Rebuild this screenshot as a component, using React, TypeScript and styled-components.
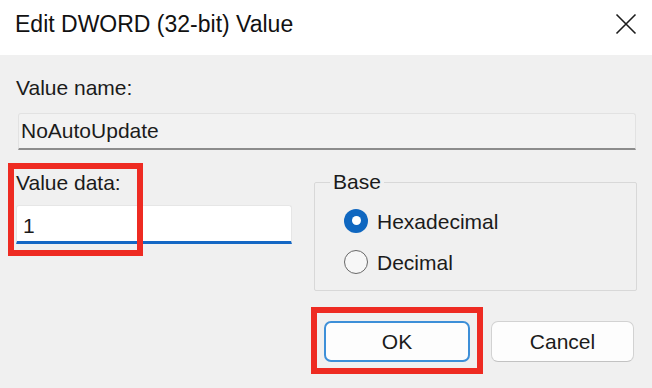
import React, { useState } from 'react';
import styled, { createGlobalStyle } from 'styled-components';

const GlobalStyle = createGlobalStyle`
	html, body {
		margin: 0;
		padding: 0;
		background: #f0f0f0;
	}
	* {
		box-sizing: border-box;
	}
`;

type Base = 'hex' | 'dec';

const App: React.FC = () => {
	const [value, setValue] = useState('1');
	const [base, setBase] = useState<Base>('hex');

	return (
		<Dialog>
			<GlobalStyle />
			<TitleBar>
				<Title>Edit DWORD (32-bit) Value</Title>
				<CloseButton aria-label="Close">
					<svg width="22" height="22" viewBox="0 0 22 22">
						<path d="M1.5 1.5 L20.5 20.5 M20.5 1.5 L1.5 20.5" stroke="#1c1c1c" strokeWidth="1.6" />
					</svg>
				</CloseButton>
			</TitleBar>

			<Body>
				<Label>Value name:</Label>
				<ReadOnlyField>NoAutoUpdate</ReadOnlyField>

				<MiddleRow>
					<DataColumn>
						<Label $offset={1}>Value data:</Label>
						<DataInput value={value} onChange={(e) => setValue(e.target.value)} />
						<Highlight />
					</DataColumn>

					<GroupBox>
						<Legend>Base</Legend>
						<RadioList>
							<RadioRow onClick={() => setBase('hex')}>
								<RadioCircle $checked={base === 'hex'} />
								<span>Hexadecimal</span>
							</RadioRow>
							<RadioRow onClick={() => setBase('dec')}>
								<RadioCircle $checked={base === 'dec'} />
								<span>Decimal</span>
							</RadioRow>
						</RadioList>
					</GroupBox>
				</MiddleRow>

				<ButtonRow>
					<Marked>
						<Button $primary $width={146}>OK</Button>
					</Marked>
					<Button $width={143}>Cancel</Button>
				</ButtonRow>
			</Body>
		</Dialog>
	);
};

const font = `"Liberation Sans", Arial, sans-serif`;
const annotation = '#ee2b22';

const Dialog = styled.div`
	width: 652px;
	height: 388px;
	overflow: hidden;
	display: flex;
	flex-direction: column;
	background: #f0f0f0;
	font-family: ${font};
	color: #1b1b1b;
`;

const TitleBar = styled.div`
	height: 55px;
	flex-shrink: 0;
	background: #ffffff;
	display: flex;
	align-items: flex-start;
	justify-content: space-between;
	padding: 12px 15px 0 15px;
`;

const Title = styled.div`
	font-size: 23px;
	line-height: 24px;
	color: #111;
`;

const CloseButton = styled.div`
	width: 22px;
	height: 22px;
	margin-top: 1px;
	display: flex;

	svg {
		display: block;
	}
`;

const Body = styled.div`
	flex: 1;
	display: flex;
	flex-direction: column;
	padding: 21px 15px 0 16px;
`;

const Label = styled.div<{ $offset?: number }>`
	font-size: 21px;
	line-height: 24px;
	padding-top: ${({ $offset }) => $offset ?? 0}px;
`;

const ReadOnlyField = styled.div`
	height: 37px;
	margin: 13px 1px 0 2px;
	padding: 5px 0 0 2px;
	font-size: 21px;
	line-height: 24px;
	background: #f2f2f2;
	border: 1px solid #e2e2e2;
	border-bottom: 2px solid #8c8c8c;
	border-radius: 3px 3px 0 0;
`;

const MiddleRow = styled.div`
	display: flex;
	align-items: flex-start;
	gap: 22px;
	margin-top: 20px;
`;

const DataColumn = styled.div`
	position: relative;
	width: 276px;
	display: flex;
	flex-direction: column;
`;

const DataInput = styled.input`
	height: 39px;
	margin-top: 10px;
	padding: 5px 0 0 6px;
	font-family: ${font};
	font-size: 21px;
	line-height: 24px;
	color: #1b1b1b;
	background: #ffffff;
	border: 1px solid #e6e6e6;
	border-bottom: 3px solid #1467c4;
	border-radius: 3px 3px 0 0;
	outline: none;
`;

const Highlight = styled.div`
	position: absolute;
	left: -8px;
	top: -7px;
	width: 135px;
	height: 93px;
	border: 6px solid ${annotation};
	pointer-events: none;
`;

const GroupBox = styled.fieldset`
	width: 323px;
	margin: 0;
	padding: 0 0 15px 15px;
	border: 1px solid #d8d8d8;
	border-radius: 2px;
	min-width: 0;
`;

const Legend = styled.legend`
	font-size: 21px;
	line-height: 24px;
	padding: 0 3px;
`;

const RadioList = styled.div`
	display: flex;
	flex-direction: column;
	gap: 17px;
	padding: 16px 0 0 14px;
`;

const RadioRow = styled.label`
	display: flex;
	align-items: center;
	gap: 9px;
	height: 24px;
	font-size: 21px;
	line-height: 24px;
	cursor: default;
`;

const RadioCircle = styled.span<{ $checked: boolean }>`
	width: 24px;
	height: 24px;
	margin-top: -3px;
	border-radius: 50%;
	flex-shrink: 0;
	display: flex;
	align-items: center;
	justify-content: center;
	background: ${({ $checked }) => ($checked ? '#0f67c0' : '#f7f7f7')};
	border: ${({ $checked }) => ($checked ? 'none' : '1.5px solid #686868')};

	&::after {
		content: '';
		display: ${({ $checked }) => ($checked ? 'block' : 'none')};
		width: 9px;
		height: 9px;
		border-radius: 50%;
		background: #ffffff;
	}
`;

const ButtonRow = styled.div`
	display: flex;
	justify-content: flex-end;
	gap: 21px;
	margin-top: 30px;
	padding-right: 3px;
`;

const Marked = styled.div`
	position: relative;
	display: flex;

	&::after {
		content: '';
		position: absolute;
		inset: -14px -13px -12px -13px;
		border: 6px solid ${annotation};
		pointer-events: none;
	}
`;

const Button = styled.button<{ $primary?: boolean; $width: number }>`
	width: ${({ $width }) => $width}px;
	height: 41px;
	font-family: ${font};
	font-size: 21px;
	color: #1b1b1b;
	background: #fdfdfd;
	border: ${({ $primary }) => ($primary ? '2px solid #3d8fd8' : '1.5px solid #d2d2d2')};
	border-bottom-color: ${({ $primary }) => ($primary ? '#3d8fd8' : '#c2c2c2')};
	border-radius: 7px;
	padding: 0;
	cursor: default;
`;

export default App;
